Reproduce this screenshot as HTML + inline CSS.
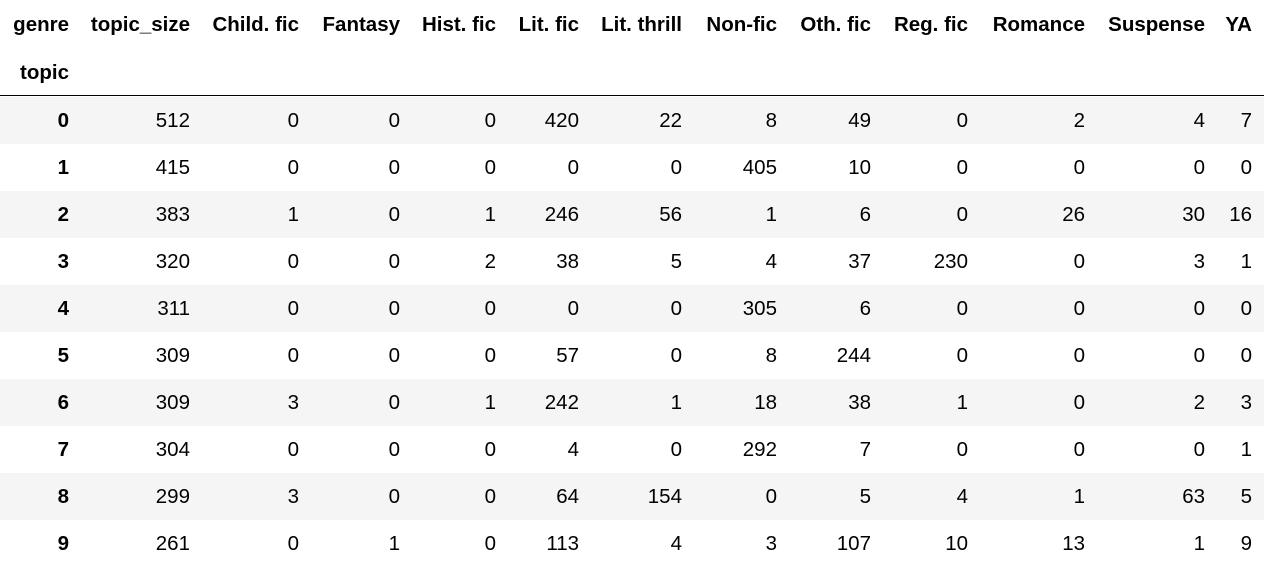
<!DOCTYPE html>
<html><head><meta charset="utf-8"><style>
body{margin:0;width:1264px;height:567px;background:#fff;overflow:hidden;font-family:"Liberation Sans",Arial,sans-serif;font-size:20.5px;color:#000;position:relative}
.r{position:absolute;left:0;width:1264px;height:47px}
.g{background:#f5f5f5}
.c{position:absolute;white-space:nowrap;text-align:right;line-height:47px}
.b{font-weight:bold}
.line{position:absolute;left:0;top:95px;width:1264px;height:1px;background:#000}
</style></head><body>
<div id="root"></div>
<div class="line"></div>
<script>
const rights=[69,190,299,400,496,579,682,777,871,968,1085,1205,1252];
const head=["genre","topic_size","Child. fic","Fantasy","Hist. fic","Lit. fic","Lit. thrill","Non-fic","Oth. fic","Reg. fic","Romance","Suspense","YA"];
const data=[
[0,512,0,0,0,420,22,8,49,0,2,4,7],
[1,415,0,0,0,0,0,405,10,0,0,0,0],
[2,383,1,0,1,246,56,1,6,0,26,30,16],
[3,320,0,0,2,38,5,4,37,230,0,3,1],
[4,311,0,0,0,0,0,305,6,0,0,0,0],
[5,309,0,0,0,57,0,8,244,0,0,0,0],
[6,309,3,0,1,242,1,18,38,1,0,2,3],
[7,304,0,0,0,4,0,292,7,0,0,0,1],
[8,299,3,0,0,64,154,0,5,4,1,63,5],
[9,261,0,1,0,113,4,3,107,10,13,1,9]];
let h='';
function cell(txt,right,top,bold){return `<div class="c${bold?' b':''}" style="right:${1264-right}px;top:${top}px">${txt}</div>`;}
head.forEach((t,i)=>h+=cell(t,rights[i],1,true));
h+=cell("topic",69,49,true);
data.forEach((row,k)=>{
 const top=97+47*k;
 h+=`<div class="r${k%2==0?' g':''}" style="top:${top}px"></div>`;
 row.forEach((v,i)=>h+=cell(v,rights[i],top,i==0));
});
document.getElementById('root').innerHTML=h;
</script>
</body></html>
